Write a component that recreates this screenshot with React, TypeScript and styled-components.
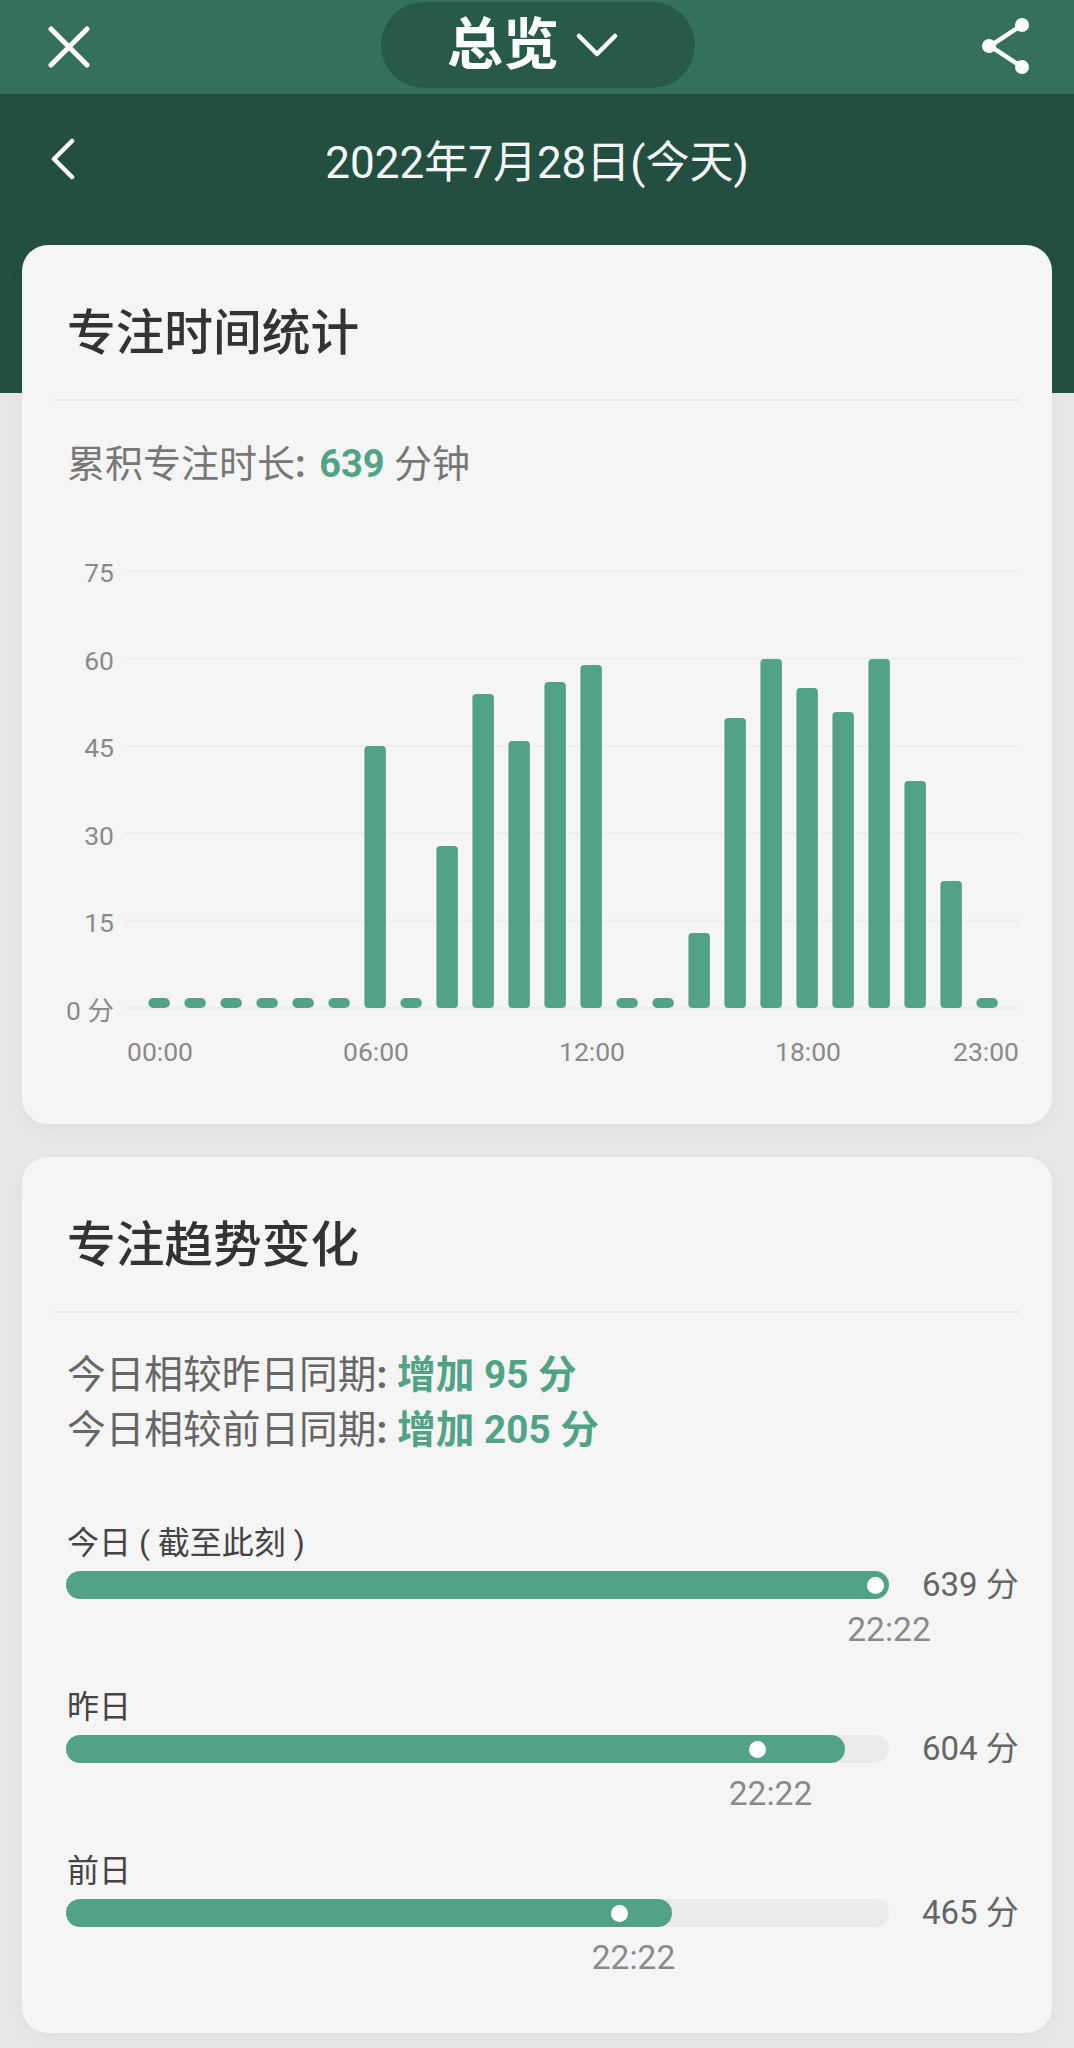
import React from 'react'
import styled, { createGlobalStyle } from 'styled-components'

const GREEN = '#52a385'

const GlobalStyle = createGlobalStyle`
  html, body {
    margin: 0;
    padding: 0;
    background: #e6e6e6;
  }
  body {
    font-family: Roboto, "Noto Sans CJK SC", sans-serif;
    overflow: hidden;
  }
`

const Page = styled.div`
  width: 1074px;
  height: 2048px;
  overflow: hidden;
  background: linear-gradient(#234f41 0 393px, #e7e7e7 393px);
`

const TopBar = styled.div`
  height: 94px;
  background: #34705c;
  display: grid;
  grid-template-columns: 1fr 314px 1fr;
  align-items: center;
  padding: 0 46px 0 48px;
  box-sizing: border-box;
`

const Pill = styled.div`
  height: 86px;
  margin-top: -4px;
  border-radius: 43px;
  background: #285a49;
  color: #fff;
  display: flex;
  align-items: center;
  justify-content: center;
  gap: 17px;
  padding-right: 11px;
`

const PillText = styled.span`
  font-size: 56px;
  font-weight: 700;
  line-height: 60px;
`

const ShareSlot = styled.div`
  display: flex;
  justify-content: flex-end;
  margin: -3px -3px 0 0;
`

const DateBar = styled.div`
  height: 151px;
  display: grid;
  grid-template-columns: 1fr auto 1fr;
  align-items: center;
  padding: 0 0 21px 50px;
  box-sizing: border-box;
`

const DateText = styled.div`
  font-size: 44px;
  line-height: 50px;
  color: #f4f7f5;
  margin: 7px 0 0 -50px;
`

const Cards = styled.div`
  display: flex;
  flex-direction: column;
  gap: 33px;
  padding: 0 22px;
`

const Card = styled.section<{ $height: number }>`
  height: ${(p) => p.$height}px;
  box-sizing: border-box;
  background: #f5f5f5;
  border-radius: 26px;
  padding: 60px 32px 0 45px;
  box-shadow: 0 6px 16px rgba(0, 0, 0, 0.03);
`

const CardTitle = styled.h2`
  margin: 0;
  font-size: 48.7px;
  line-height: 58px;
  font-weight: 500;
  color: #333;
`

const Divider = styled.div`
  height: 2px;
  margin: 36px 0 0 -12px;
  background: #e9e9e9;
`

const Summary = styled.div`
  margin-top: 38px;
  font-size: 38px;
  line-height: 50px;
  color: #777;
`

const Colon = styled.span`
  font-weight: 700;
  margin-right: 4px;
`

const Value = styled.span`
  font-weight: 700;
  color: ${GREEN};
`

const ChartRow = styled.div`
  margin-top: 69px;
  display: grid;
  grid-template-columns: 47px 896px;
  column-gap: 10px;
`

const YAxis = styled.div`
  height: 468px;
  display: flex;
  flex-direction: column;
  justify-content: space-between;
  align-items: flex-end;
`

const AxisLabel = styled.span`
  font-size: 26.5px;
  line-height: 30px;
  color: #8a8a8a;
  white-space: nowrap;
`

const Plot = styled.svg`
  display: block;
  margin-top: 12px;
`

const XAxis = styled.div`
  margin: 11px 0 0 60px;
  display: flex;
  gap: 150px;

  & > span:last-child {
    margin-left: -38px;
  }
`

const Compare = styled.div`
  margin-top: 34px;
  font-size: 38.7px;
  line-height: 55px;
  color: #666;

  ${Colon} {
    margin-right: 0;
  }
`

const Rows = styled.div`
  margin-top: 66px;
  display: flex;
  flex-direction: column;
  gap: 37px;
`

const RowLabel = styled.div`
  font-size: 32px;
  line-height: 40px;
  color: #444;
`

const BarLine = styled.div`
  margin: 8px 0 0 -1px;
  display: grid;
  grid-template-columns: 823px auto;
  column-gap: 33px;
  align-items: center;
`

const Track = styled.div`
  height: 28px;
  border-radius: 14px;
  background: #ebebeb;
`

const Fill = styled.div`
  position: relative;
  height: 100%;
  border-radius: 14px;
  background: ${GREEN};
`

const Dot = styled.div`
  position: absolute;
  top: 5.5px;
  width: 17px;
  height: 17px;
  margin-left: -8.5px;
  border-radius: 50%;
  background: #fff;
`

const RowValue = styled.span`
  font-size: 33px;
  line-height: 28px;
  color: #666;
  white-space: nowrap;
`

const RowTime = styled.div`
  margin-top: 11px;
  font-size: 33.5px;
  line-height: 40px;
  color: #8a8a8a;
  width: max-content;
  transform: translateX(-50%);
`

const IconSvg = styled.svg`
  display: block;
`

const CloseIcon = () => (
  <IconSvg width="42" height="42" viewBox="0 0 42 42" fill="none" stroke="#fff" strokeWidth="5" strokeLinecap="round">
    <path d="M3 3l36 36M39 3L3 39" />
  </IconSvg>
)

const ChevronDown = () => (
  <IconSvg width="42" height="26" viewBox="0 0 42 26" fill="none" stroke="#fff" strokeWidth="4.5" strokeLinecap="round" strokeLinejoin="round">
    <path d="M3 4l18 18L39 4" />
  </IconSvg>
)

const ShareIcon = () => (
  <IconSvg width="50" height="58" viewBox="0 0 50 58" fill="#fff" stroke="#fff">
    <path d="M41 8L9 29l32 21" fill="none" strokeWidth="4.5" />
    <circle cx="41" cy="8" r="7" stroke="none" />
    <circle cx="8" cy="29" r="7" stroke="none" />
    <circle cx="41" cy="50" r="7" stroke="none" />
  </IconSvg>
)

const BackIcon = () => (
  <IconSvg width="26" height="42" viewBox="0 0 26 42" fill="none" stroke="#fff" strokeWidth="4.5" strokeLinecap="round" strokeLinejoin="round">
    <path d="M22 3L4 21l18 18" />
  </IconSvg>
)

// bar heights in px, one per hour
const hours = [10, 10, 10, 10, 10, 10, 262, 10, 162, 314, 267, 326, 343, 10, 10, 75, 290, 349, 320, 296, 349, 227, 127, 10]
const yLabels = ['75', '60', '45', '30', '15', '0 分']
const xLabels = ['00:00', '06:00', '12:00', '18:00', '23:00']

const BASE_Y = 438
const LINE_STEP = 87.4

const HourChart = () => (
  <Plot width="896" height="440" viewBox="0 0 896 440">
    {[0, 1, 2, 3, 4, 5].map((i) => (
      <rect key={i} x="0" y={BASE_Y - i * LINE_STEP - 1} width="896" height="2" fill="#eeeeee" />
    ))}
    {hours.map((h, i) => (
      <rect
        key={i}
        x={24.4 + i * 36}
        y={BASE_Y - h}
        width="21.5"
        height={h}
        rx={h < 20 ? 5 : 4}
        fill={GREEN}
      />
    ))}
  </Plot>
)

const progress = [
  { label: '今日 ( 截至此刻 )', value: '639 分', fill: 823, dot: 809, time: 822 },
  { label: '昨日', value: '604 分', fill: 779, dot: 691, time: 703.5 },
  { label: '前日', value: '465 分', fill: 606, dot: 553, time: 566.5 },
]

const App: React.FC = () => (
  <Page>
    <GlobalStyle />
    <TopBar>
      <CloseIcon />
      <Pill>
        <PillText>总览</PillText>
        <ChevronDown />
      </Pill>
      <ShareSlot>
        <ShareIcon />
      </ShareSlot>
    </TopBar>
    <DateBar>
      <BackIcon />
      <DateText>2022年7月28日(今天)</DateText>
    </DateBar>
    <Cards>
      <Card $height={879}>
        <CardTitle>专注时间统计</CardTitle>
        <Divider />
        <Summary>
          累积专注时长<Colon>:</Colon> <Value>639</Value> 分钟
        </Summary>
        <ChartRow>
          <YAxis>
            {yLabels.map((l) => (
              <AxisLabel key={l}>{l}</AxisLabel>
            ))}
          </YAxis>
          <HourChart />
        </ChartRow>
        <XAxis>
          {xLabels.map((l) => (
            <AxisLabel key={l}>{l}</AxisLabel>
          ))}
        </XAxis>
      </Card>
      <Card $height={876}>
        <CardTitle>专注趋势变化</CardTitle>
        <Divider />
        <Compare>
          <div>
            今日相较昨日同期<Colon>:</Colon> <Value>增加 95 分</Value>
          </div>
          <div>
            今日相较前日同期<Colon>:</Colon> <Value>增加 205 分</Value>
          </div>
        </Compare>
        <Rows>
          {progress.map((p) => (
            <div key={p.label}>
              <RowLabel>{p.label}</RowLabel>
              <BarLine>
                <Track>
                  <Fill style={{ width: p.fill }}>
                    <Dot style={{ left: p.dot }} />
                  </Fill>
                </Track>
                <RowValue>{p.value}</RowValue>
              </BarLine>
              <RowTime style={{ marginLeft: p.time }}>22:22</RowTime>
            </div>
          ))}
        </Rows>
      </Card>
    </Cards>
  </Page>
)

export default App
